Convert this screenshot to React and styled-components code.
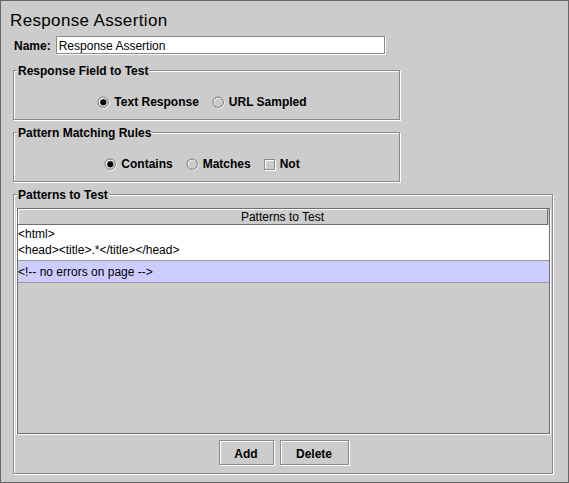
import React from 'react';
import styled, { createGlobalStyle } from 'styled-components';

const Global = createGlobalStyle`
  html, body { margin: 0; padding: 0; background: #cccccc; }
  *, *::before, *::after { box-sizing: border-box; }
  body { font-family: "Liberation Sans", Arial, sans-serif; }
`;

const GRAY = '#8a8a8a';
const DARK = '#6e6e6e';

const Frame = styled.div`
  width: 569px;
  height: 483px;
  background: #cccccc;
  border: 1px solid #666666;
  padding: 9px 0 0 9px;
  display: flex;
  flex-direction: column;
  font-family: "Liberation Sans", Arial, sans-serif;
  color: #000;
  overflow: hidden;
`;

const Title = styled.h1`
  margin: 0;
  height: 21px;
  padding-top: 1px;
  font-size: 17px;
  font-weight: normal;
  line-height: 20px;
  letter-spacing: 0.35px;
`;

const Body = styled.div`
  display: flex;
  flex-direction: column;
  padding-left: 3px;
`;

const NameRow = styled.div`
  display: flex;
  align-items: center;
  gap: 5px;
  height: 18px;
  margin-top: 5px;
  padding-left: 1px;
`;

const Label = styled.span`
  font-size: 12px;
  font-weight: bold;
  line-height: 16px;
  padding-top: 1px;
`;

const TextInput = styled.input`
  width: 329px;
  height: 18px;
  margin: 0;
  padding: 2px 2px 0;
  border: 1px solid ${GRAY};
  box-shadow: 1px 1px 0 #fff;
  background: #fff;
  font-family: "Liberation Sans", Arial, sans-serif;
  font-size: 12px;
  color: #000;
  outline: none;
`;

const Group = styled.div`
  position: relative;
  width: ${p => p.$w}px;
  height: ${p => p.$h}px;
  margin-top: ${p => p.$mt}px;
  border: 1px solid ${GRAY};
  box-shadow: inset 1px 1px 0 #fff, 1px 1px 0 #fff;
  padding: ${p => p.$pad};
  display: flex;
  flex-direction: column;
`;

const GroupTitle = styled.span`
  position: absolute;
  top: -7px;
  left: 3px;
  padding: 0 1px;
  background: #cccccc;
  font-size: 12px;
  font-weight: bold;
  line-height: 14px;
`;

const OptionRow = styled.div`
  display: flex;
  justify-content: center;
  align-items: center;
  gap: 13px;
  height: 16px;
`;

const Option = styled.label`
  display: flex;
  align-items: center;
  gap: 4px;
  font-size: 12px;
  font-weight: bold;
  line-height: 16px;
`;

const Check = styled.span`
  display: inline-block;
  width: 11px;
  height: 11px;
  margin-right: 1px;
  border: 1px solid ${GRAY};
  box-shadow: inset 1px 1px 0 #fff, 1px 1px 0 #fff;
`;

const Radio = ({ on }) => (
  <svg width="13" height="13" viewBox="0 0 13 13">
    <circle cx="7" cy="7" r="5.2" fill="none" stroke="#fff" strokeWidth="1" />
    <circle cx="6.2" cy="6.2" r="5.2" fill="none" stroke="#7a7a7a" strokeWidth="1" />
    {on && <circle cx="6.3" cy="6.3" r="3" fill="#000" />}
  </svg>
);

const Pane = styled.div`
  height: 226px;
  border: 1px solid ${DARK};
  box-shadow: -1px 0 0 #fff, 1px 1px 0 #fff;
  background: #cccccc;
  display: flex;
  flex-direction: column;
`;

const HeaderCell = styled.div`
  height: 16px;
  margin-right: 1px;
  padding-top: 1px;
  border-right: 1px solid ${DARK};
  border-bottom: 1px solid ${DARK};
  box-shadow: inset 1px 1px 0 #fff;
  text-align: center;
  font-size: 12px;
  line-height: 14px;
`;

const Row = styled.div`
  background: ${p => (p.$selected ? '#ccccff' : '#ffffff')};
  border-bottom: 1px solid #9a9a9a;
  padding: ${p => p.$pad};
  font-size: 12px;
  line-height: 16px;
  white-space: pre;
`;

const ButtonRow = styled.div`
  display: flex;
  justify-content: center;
  gap: 6px;
  margin-top: 6px;
`;

const Button = styled.button`
  width: ${p => p.$w}px;
  height: 25px;
  margin: 0;
  padding: 2px 0 0;
  border: 1px solid ${GRAY};
  box-shadow: inset 1px 1px 0 #fff, 1px 1px 0 #fff;
  background: #cccccc;
  font-family: "Liberation Sans", Arial, sans-serif;
  font-size: 12px;
  font-weight: bold;
  color: #000;
`;

export default function App() {
  return (
    <Frame>
      <Global />
      <Title>Response Assertion</Title>
      <Body>
        <NameRow>
          <Label>Name:</Label>
          <TextInput defaultValue="Response Assertion" />
        </NameRow>

        <Group $w={387} $h={50} $mt={16} $pad="23px 9px 0 0">
          <GroupTitle>Response Field to Test</GroupTitle>
          <OptionRow>
            <Option><Radio on />Text Response</Option>
            <Option><Radio />URL Sampled</Option>
          </OptionRow>
        </Group>

        <Group $w={387} $h={50} $mt={12} $pad="23px 9px 0 0">
          <GroupTitle>Pattern Matching Rules</GroupTitle>
          <OptionRow>
            <Option><Radio on />Contains</Option>
            <Option><Radio />Matches</Option>
            <Option><Check />Not</Option>
          </OptionRow>
        </Group>

        <Group $w={540} $h={280} $mt={12} $pad="13px 2px 8px 3px">
          <GroupTitle>Patterns to Test</GroupTitle>
          <Pane>
            <HeaderCell>Patterns to Test</HeaderCell>
            <Row $pad="1px 0 2px 0">{'<html>\n<head><title>.*</title></head>'}</Row>
            <Row $selected $pad="3px 0 2px 0">{'<!-- no errors on page -->'}</Row>
          </Pane>
          <ButtonRow>
            <Button $w={55}>Add</Button>
            <Button $w={69}>Delete</Button>
          </ButtonRow>
        </Group>
      </Body>
    </Frame>
  );
}
